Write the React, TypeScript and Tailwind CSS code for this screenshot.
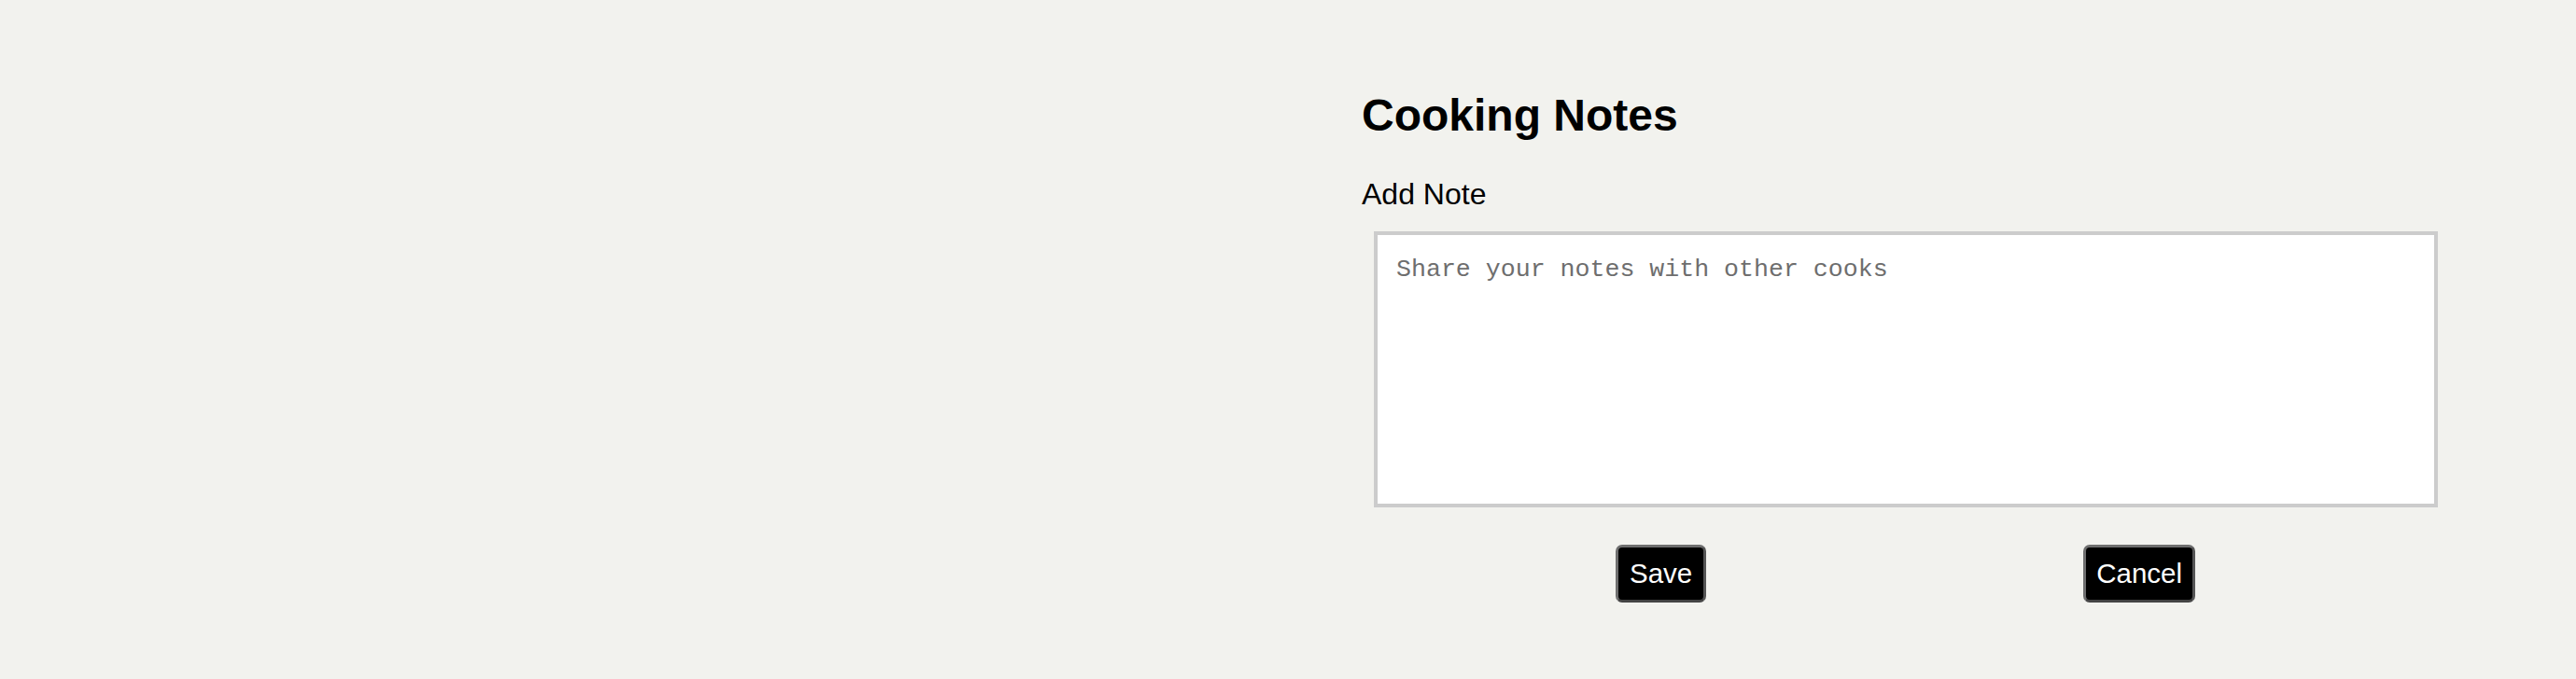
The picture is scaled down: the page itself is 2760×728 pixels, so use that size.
import React from "react";

export default function App() {
  return (
    <div className="min-h-[728px] w-full bg-[#f2f2ee] font-['Liberation_Sans',Arial,sans-serif] text-black">
      <div className="flex">
        <div className="w-[1459px] shrink-0" />
        <div className="flex w-[1167px] flex-col pt-[96px]">
          <h1 className="text-[48px] font-bold leading-[55px]">Cooking Notes</h1>
          <label htmlFor="note" className="mt-[39px] text-[32px] leading-[37px]">
            Add Note
          </label>
          <textarea
            id="note"
            placeholder="Share your notes with other cooks"
            className="ml-[13px] mt-[21px] h-[296px] w-[1140px] resize-none border-[4px] border-[#cccccc] bg-white pl-[20px] pr-[18px] pt-[22px] font-['Liberation_Mono','Courier_New',monospace] text-[26.6px] leading-[31px] text-black outline-none placeholder:text-[#6e6e6e]"
          />
          <div className="ml-[272px] mt-[40px] flex gap-[404px]">
            <button className="rounded-[7px] border-[3px] border-[#6e6e6e] border-b-[#444444] border-r-[#555555] bg-black px-[12px] py-[11px] text-[29.5px] leading-[34px] text-white">
              Save
            </button>
            <button className="rounded-[7px] border-[3px] border-[#6e6e6e] border-b-[#444444] border-r-[#555555] bg-black px-[11px] py-[11px] text-[29.5px] leading-[34px] text-white">
              Cancel
            </button>
          </div>
        </div>
      </div>
    </div>
  );
}
